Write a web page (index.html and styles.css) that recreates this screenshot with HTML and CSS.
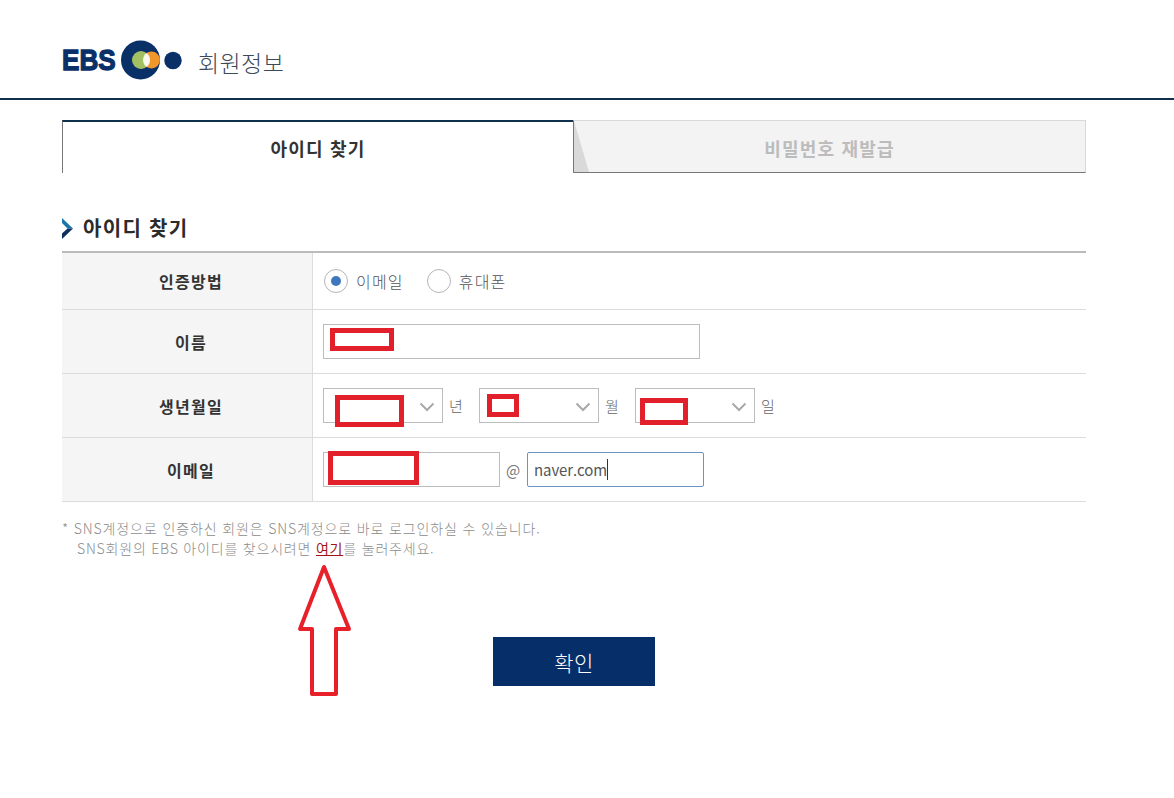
FILE: index.html
```html
<!DOCTYPE html>
<html lang="ko">
<head>
<meta charset="utf-8">
<title>EBS 회원정보</title>
<link rel="stylesheet" href="styles.css">
</head>
<body>
<header class="site-header">
  <div class="logo">
    <span class="logo-text">EBS</span>
    <svg class="logo-mark" width="66" height="40" viewBox="0 0 66 40">
      <circle cx="19.500" cy="20" r="19.500" fill="#0a3068"/>
      <circle cx="20" cy="20" r="9" fill="#a3c163"/>
      <circle cx="30.500" cy="20" r="8.500" fill="#f0962a"/>
      <path d="M25.670 13.010A9 9 0 0 1 25.670 26.990A8.500 8.500 0 0 1 25.670 13.010z" fill="#fbf8ec"/>
      <circle cx="52" cy="20.500" r="8.700" fill="#0a3068"/>
    </svg>
    <span class="logo-title">회원정보</span>
  </div>
</header>

<main class="content">
  <nav class="tabs">
    <a class="tab tab-active">아이디 찾기</a>
    <a class="tab tab-idle">비밀번호 재발급</a>
  </nav>

  <h2 class="section-title">
    <svg class="chevron" width="12" height="21" viewBox="0 0 12 21">
      <path d="M0 0 11 10.500H5.500L0 5z" fill="#1b75ad"/>
      <path d="M11 10.500 0 21V15.500L5.500 10.500z" fill="#0f2f5f"/>
    </svg>
    아이디 찾기
  </h2>

  <div class="form-table">
    <div class="row row-method">
      <div class="label">인증방법</div>
      <div class="field">
        <span class="radio radio-on"></span><span class="radio-text">이메일</span>
        <span class="radio"></span><span class="radio-text">휴대폰</span>
      </div>
    </div>
    <div class="row">
      <div class="label">이름</div>
      <div class="field"><div class="input input-name"><span class="mark mark-name"></span></div></div>
    </div>
    <div class="row">
      <div class="label">생년월일</div>
      <div class="field">
        <div class="select">
          <span class="mark mark-year"></span>
          <svg class="caret" width="16" height="10" viewBox="0 0 16 10"><path d="M1.500 1.500 8 8l6.500-6.500" fill="none" stroke="#a9a9a9" stroke-width="2"/></svg>
        </div>
        <span class="unit">년</span>
        <div class="select">
          <span class="mark mark-month"></span>
          <svg class="caret" width="16" height="10" viewBox="0 0 16 10"><path d="M1.500 1.500 8 8l6.500-6.500" fill="none" stroke="#a9a9a9" stroke-width="2"/></svg>
        </div>
        <span class="unit">월</span>
        <div class="select">
          <span class="mark mark-day"></span>
          <svg class="caret" width="16" height="10" viewBox="0 0 16 10"><path d="M1.500 1.500 8 8l6.500-6.500" fill="none" stroke="#a9a9a9" stroke-width="2"/></svg>
        </div>
        <span class="unit">일</span>
      </div>
    </div>
    <div class="row">
      <div class="label">이메일</div>
      <div class="field">
        <div class="input input-email"><span class="mark mark-email"></span></div>
        <span class="at">@</span>
        <div class="input input-domain">naver.com<span class="cursor"></span></div>
      </div>
    </div>
  </div>

  <div class="notes">
    <p class="first">* SNS계정으로 인증하신 회원은 SNS계정으로 바로 로그인하실 수 있습니다.</p>
    <p class="indent">SNS회원의 EBS 아이디를 찾으시려면 <a class="link">여기</a>를 눌러주세요.</p>
    <svg class="arrow" width="56" height="134" viewBox="0 0 56 134">
      <path d="M27 4 3 66H15V131H39V66H52z" fill="none" stroke="#e8202a" stroke-width="4" stroke-linejoin="round"/>
    </svg>
  </div>

  <div class="actions"><button class="confirm">확인</button></div>
</main>
</body>
</html>
```

FILE: styles.css
```css
* { box-sizing: border-box; }
html, body { margin: 0; padding: 0; background: #fff; }
body {
  width: 1174px;
  height: 798px;
  overflow: hidden;
  font-family: "Noto Sans CJK KR", "Noto Sans", sans-serif;
  color: #333;
}
.site-header { height: 100px; border-bottom: 2px solid #10304e; padding: 40px 0 0 62px; }
.logo { display: flex; align-items: center; height: 40px; }
.logo-text {
  font-family: "Liberation Sans", sans-serif;
  font-weight: 700;
  font-size: 30px;
  color: #0a3068;
  -webkit-text-stroke: 1.300px #0a3068;
  width: 59px;
  transform: scaleX(0.87);
  transform-origin: left center;
}
.logo-mark { flex: none; }
.logo-title { margin-left: 11px; padding-top: 3px; font-size: 23px; font-weight: 300; color: #3c4a58; letter-spacing: 0.4px; }

.content { width: 1024px; margin-left: 62px; }
.tabs { display: flex; height: 53px; margin-top: 20px; }
.tab {
  display: flex;
  align-items: center;
  justify-content: center;
  font-size: 18px;
  font-weight: 700;
  letter-spacing: 1.200px;
}
.tab-active {
  width: 511px;
  padding-top: 1px;
  border-top: 2px solid #10304e;
  border-left: 1px solid #777;
  color: #333;
}
.tab-idle {
  position: relative;
  width: 513px;
  padding-top: 2px;
  border-top: 1px solid #d9d9d9;
  border-right: 1px solid #d9d9d9;
  border-bottom: 1px solid #777;
  border-left: 1px solid #777;
  color: #bcbcbc;
  background: #f3f3f3;
}
.tab-idle::before {
  content: "";
  position: absolute;
  left: 0;
  top: 0;
  bottom: 0;
  width: 15px;
  background: #d9d9d9;
  clip-path: polygon(0 0, 100% 100%, 0 100%);
}
.section-title {
  display: flex;
  align-items: center;
  gap: 9px;
  height: 30px;
  margin: 40px 0 0;
  font-size: 20px;
  font-weight: 700;
  letter-spacing: 1.300px;
  color: #2b2b2b;
  line-height: 28px;
}
.chevron { flex: none; margin-top: 1px; }

.form-table { margin-top: 8px; border-top: 2px solid #bbb; }
.row { display: flex; height: 64px; border-bottom: 1px solid #dcdcdc; }
.row-method { height: 57px; }
.label {
  width: 251px;
  display: flex;
  align-items: center;
  justify-content: center;
  padding-left: 8px;
  background: #f5f5f5;
  border-right: 1px solid #dcdcdc;
  font-size: 16px;
  font-weight: 700;
  letter-spacing: 1.300px;
  color: #333;
}
.field { flex: 1; display: flex; align-items: center; padding-left: 10px; }
.radio {
  width: 24px;
  height: 24px;
  flex: none;
  border: 1px solid #b5b5b5;
  border-radius: 50%;
  position: relative;
  margin-left: 1px;
}
.radio-on::after {
  content: "";
  position: absolute;
  left: 6px;
  top: 6px;
  width: 10px;
  height: 10px;
  border-radius: 50%;
  background: #3f78bd;
}
.radio-text { font-size: 16px; font-weight: 300; color: #555; margin: 0 22px 0 8px; letter-spacing: 1.200px; }
.input, .select {
  position: relative;
  height: 35px;
  border: 1px solid #bdbdbd;
  background: #fff;
}
.input-name { width: 377px; }
.input-email { width: 177px; }
.input-domain {
  width: 177px;
  margin-left: 4px;
  border: 1px solid #6d93c3;
  border-radius: 2px;
  display: flex;
  align-items: center;
  padding-left: 6px;
  font-size: 15px;
  letter-spacing: -0.1px;
  color: #555;
}
.cursor { width: 1px; height: 21px; background: #333; }
.at { font-size: 15px; color: #777; margin-left: 6px; width: 17px; }
.select { width: 120px; flex: none; }
.caret { position: absolute; right: 7px; top: 13px; }
.unit { font-size: 15px; font-weight: 300; color: #666; width: 36px; padding-left: 6px; flex: none; }
.mark { position: absolute; border: 5px solid #e1202c; background: #fff; }
.mark-name { left: 6px; top: 3px; width: 64px; height: 23px; }
.mark-year { left: 11px; top: 6px; width: 69px; height: 32px; }
.mark-month { left: 7px; top: 5px; width: 32px; height: 23px; }
.mark-day { left: 4px; top: 9px; width: 48px; height: 27px; }
.mark-email { left: 4px; top: -2px; width: 91px; height: 34px; }

.notes { position: relative; margin-top: 16px; font-size: 14px; font-weight: 300; line-height: 20px; color: #8c8c8c; }
.notes p { margin: 0; letter-spacing: 0.8px; }
.notes .first { letter-spacing: 0.870px; }
.notes .indent { padding-left: 15px; }
.link { color: #a31515; font-weight: 400; text-decoration: underline; }
.arrow { position: absolute; left: 235px; top: 45px; }

.actions { display: flex; justify-content: center; margin-top: 79px; }
.confirm {
  width: 162px;
  height: 49px;
  border: 0;
  background: #062f6a;
  color: #fff;
  font-family: inherit;
  font-size: 21px;
  font-weight: 300;
  letter-spacing: 0.5px;
}
```
